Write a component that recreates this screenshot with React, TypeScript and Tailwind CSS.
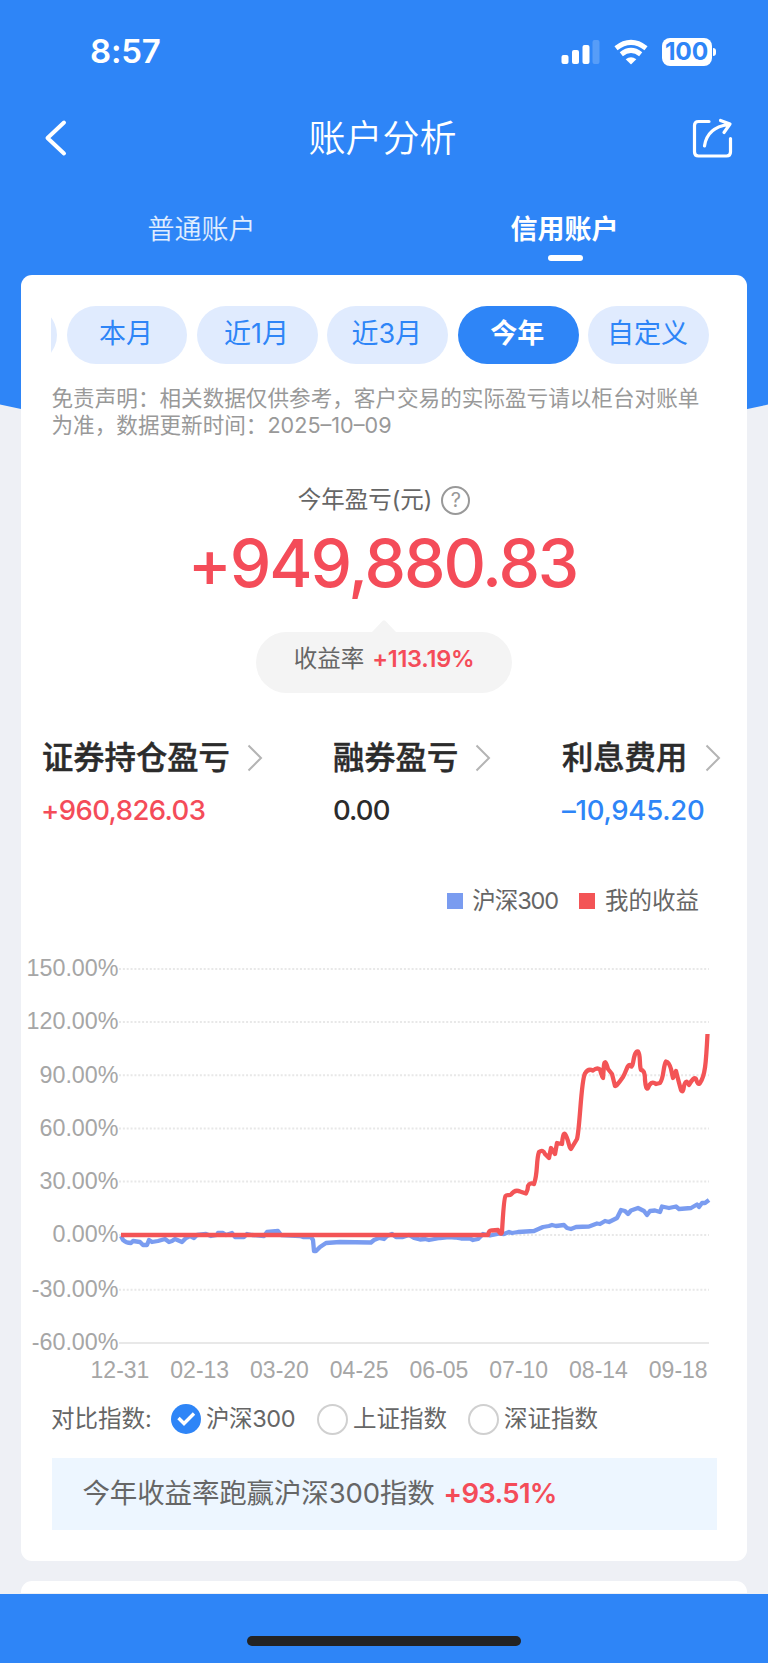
const periods = ['本月', '近1月', '近3月', '今年', '自定义']

const metrics = [
  { title: '证券持仓盈亏', value: '+960,826.03', color: 'text-[#f44c59] tracking-[-0.6px] -ml-px', width: 'w-[291px]', gap: 'gap-[17px]' },
  { title: '融券盈亏', value: '0.00', color: 'text-[#2b2b2b] tracking-[-0.9px]', width: 'w-[229px]', gap: 'gap-[17px]' },
  { title: '利息费用', value: '–10,945.20', color: 'text-[#2e85f7] tracking-[-0.25px]', width: 'w-[160px]', gap: 'gap-[18px]' },
]

const indexes = [
  { name: '沪深300', checked: true, width: 'w-[146px]' },
  { name: '上证指数', checked: false, width: 'w-[151px]' },
  { name: '深证指数', checked: false, width: 'w-[140px]' },
]

const yTicks = [
  { label: '150.00%', y: 969 },
  { label: '120.00%', y: 1022 },
  { label: '90.00%', y: 1075.3 },
  { label: '60.00%', y: 1128.6 },
  { label: '30.00%', y: 1181.5 },
  { label: '0.00%', y: 1235 },
  { label: '-30.00%', y: 1289.7 },
  { label: '-60.00%', y: 1343 },
]

const xTicks = ['12-31', '02-13', '03-20', '04-25', '06-05', '07-10', '08-14', '09-18']

const indexLine =
  'M121 1236L123 1240Q126 1243 131 1243L133 1241L140 1242L143 1245L147 1245L149 1240L152 1242L158 1241L165 1239L169 1242L172 1241L175 1239L182 1242L186 1238L190 1236L194 1238L197 1235L206 1234L211 1236L217 1235L218 1233L223 1233L226 1235L232 1233L235 1237L244 1237L247 1234L252 1235L264 1236L267 1232L278 1231L281 1235L300 1236L303 1237L311 1237L313 1240L314 1251L316 1251L320 1247L326 1243L340 1242L371 1242.5L374 1240L379 1238L384 1239L387 1236L392 1234L396 1237L403 1237L409 1235L414 1238L420 1239.5L425 1239L429 1240L440 1238L449 1237L455 1237.5L461 1238.5L470 1238.5L473 1240L478 1239L483 1234L490 1235.5L500 1233.5L504 1234L509 1232L512 1233L518 1232L534 1231L543 1227L549 1226L552 1225L556 1226L564 1225L567 1228L571 1229L576 1227L589 1226.5L597 1223.5L600 1224L605 1221L609 1222L617 1218L621 1210L625 1211L628 1214L631 1210.5L638 1208L644 1211L647 1215L650 1211L655 1210.5L660 1212L662 1206.5L669 1208L676 1206.5L679 1209L691 1208L697 1204.5L699 1207L702 1203L705 1203L709 1200'

const profitLine =
  'M121 1235H488Q489 1230 492 1230.5L498 1230Q501 1236 502 1232C503 1214 504 1198 505.5 1196C507 1194 509 1196 511 1194.5Q515 1189 520 1191.5L526 1193.5Q528 1190 528 1186Q530 1182 534 1184C538 1174 536 1160 539 1152Q543 1149 545 1154L549 1158L551 1148L555 1154L557 1143L562 1144Q563 1132 565 1134C569 1140 569 1149 571 1149L577 1139C580 1128 581 1080 585 1073.5Q588 1068 593 1070.5Q597 1067 600 1069.5Q602 1078 603 1078L604 1065Q605 1058 608 1069L612 1074L615 1086Q616 1087 623 1077C627 1070 627 1065 630 1065Q632 1069 633 1063Q635 1050 638 1051.5C641 1055 639 1065 641 1070Q645 1070 645 1080Q646 1091 648 1088Q651 1080 656 1084L660 1083C664 1078 663 1066 666 1061.5Q669 1062 671 1069L673 1078L676 1071Q679 1083 681 1090Q683 1094 684 1086Q686 1078 689 1085Q694 1076 696 1079Q698 1086 700 1083C705 1076 706 1064 707.5 1034'

function StatusBar() {
  return (
    <div className="flex h-[102px] items-center justify-between pl-[90px] pr-[52px] pt-px">
      <span className="text-[33px] font-semibold leading-none tracking-[-0.2px]">8:57</span>
      <div className="flex items-center">
        <svg width="40" height="26" viewBox="0 0 40 26" fill="#fff">
          <rect x="0.5" y="16" width="7" height="9" rx="2" />
          <rect x="11" y="11" width="7" height="14" rx="2" />
          <rect x="21.5" y="6" width="7" height="19" rx="2" />
          <rect x="31.5" y="1" width="7" height="24" rx="2" opacity=".2" />
        </svg>
        <svg className="ml-[13px] mr-px" width="34" height="26" viewBox="0 0 34 26" fill="none" stroke="#fff" strokeWidth="5">
          <path d="M2 9.2Q17 -2.5 32 9.2" />
          <path d="M7.3 15.2Q17 7.500 26.700 15.2" />
          <path d="M11.7 20.2Q17 16.2 22.3 20.2L17.5 25Q17 25.4 16.5 25Z" fill="#fff" stroke="none" />
        </svg>
        <div className="ml-[13px] flex h-[28px] w-[50px] items-center justify-center rounded-[8px] bg-white text-[24.500px] font-bold leading-none tracking-[-0.2px] text-[#2e85f7]">
          100
        </div>
        <div className="ml-[1.5px] h-[8px] w-[3px] rounded-r-full bg-white" />
      </div>
    </div>
  )
}

function Header() {
  return (
    <header className="h-[400px] bg-[#2e85f7] text-white">
      <StatusBar />
      <div className="flex h-[73px] items-center justify-between pl-[42px] pr-[35px]">
        <svg className="-mt-px" width="44" height="40" viewBox="0 0 44 40" fill="none" stroke="#fff" strokeWidth="4" strokeLinecap="round" strokeLinejoin="round">
          <path d="M22 4.500L5.500 20L22 35.500" />
        </svg>
        <h1 className="-ml-[10px] text-[37px] font-[350] leading-none">账户分析</h1>
        <svg className="-mt-[3px]" width="44" height="44" viewBox="0 0 44 44" fill="none" stroke="#fff" strokeWidth="3.2" strokeLinecap="round" strokeLinejoin="round">
          <path d="M20 6.500H9.500Q5.500 6.500 5.500 10.500V37Q5.500 41 9.500 41H37.500Q41.500 41 41.500 37V23.500" />
          <path d="M15.500 31Q18 12.500 39.500 9.500M31.500 5.500L41 9L35 17.500" />
        </svg>
      </div>
      <nav className="grid h-[99px] grid-cols-2 px-[21px] pt-[36px] text-[27px] leading-[38px]">
        <div className="-ml-[2px] text-center font-[350] text-white/85">普通账户</div>
        <div className="flex flex-col items-center font-bold">
          <span className="-ml-[2px]">信用账户</span>
          <span className="mt-[6px] h-[6px] w-[35px] rounded-full bg-white" />
        </div>
      </nav>
    </header>
  )
}

function PeriodTabs() {
  return (
    <div className="ml-[30px] flex h-[58px] w-[665px] overflow-hidden">
      <span className="-ml-[115px] w-[121px] shrink-0 rounded-full bg-[#e0ebfe]" />
      {periods.map((p) => (
        <button
          key={p}
          className={`ml-[9.700px] w-[120.700px] shrink-0 rounded-full pb-[2px] pr-[2px] text-[27px] leading-none ${
            p === '今年' ? 'bg-[#2e85f7] font-bold text-white' : 'bg-[#e0ebfe] text-[#2e85f7]'
          }`}
        >
          {p}
        </button>
      ))}
    </div>
  )
}

function Summary() {
  return (
    <section className="flex flex-col items-center">
      <div className="mt-[42.500px] flex h-[36px] items-center text-[23.500px] text-[#666]">
        <span>今年盈亏(元)</span>
        <span className="ml-[9px] flex h-[29px] w-[29px] items-center justify-center rounded-full border-2 border-[#999] text-[20px] leading-none text-[#999]">
          ?
        </span>
      </div>
      <div className="-ml-[3px] mt-[11px] h-[68px] text-[66px] font-medium leading-[68px] tracking-[-2.1px] text-[#f44c59]">
        +949,880.83
      </div>
      <svg className="mt-[23px] block" width="24" height="12" viewBox="0 0 24 12">
        <path d="M0 12L10.500 1Q12 -.5 13.500 1L24 12Z" fill="#f4f4f4" />
      </svg>
      <div className="flex h-[61px] w-[256px] justify-center rounded-full bg-[#f4f4f4] pt-[10px] text-[23.500px] leading-[34px] text-[#666]">
        收益率<span className="ml-[8px] font-semibold tracking-[-0.25px] text-[#f44c59]">+113.19%</span>
      </div>
    </section>
  )
}

function Metrics() {
  return (
    <section className="mt-[45px] flex pl-[21px]">
      {metrics.map((m) => (
        <div key={m.title} className={`shrink-0 ${m.width}`}>
          <div className={`flex h-[42px] items-center ${m.gap}`}>
            <span className="whitespace-nowrap text-[31.300px] font-medium leading-none text-[#2b2b2b] [-webkit-text-stroke:0.5px_#2b2b2b]">
              {m.title}
            </span>
            <svg className="-mt-[2px] shrink-0" width="16" height="28" viewBox="0 0 16 28" fill="none" stroke="#b4b4b4" strokeWidth="2">
              <path d="M1.500 1.500L14 14L1.500 26.500" />
            </svg>
          </div>
          <div className={`mt-[12px] text-[27.500px] font-medium leading-[36px] ${m.color}`}>{m.value}</div>
        </div>
      ))}
    </section>
  )
}

function Chart() {
  return (
    <section>
      <div className="mt-[55px] flex h-[36px] items-center justify-end pr-[48px] text-[23.500px] text-[#666]">
        <span className="mr-[9px] h-[16px] w-[16px] bg-[#7a9cf0]" />
        <span className="tracking-[-1.1px]">沪深300</span>
        <span className="ml-[21px] mr-[10px] h-[16px] w-[16px] bg-[#f35456]" />
        <span>我的收益</span>
      </div>
      <svg className="block" width="726" height="471" viewBox="21 919 726 471" fontFamily='"Liberation Sans", sans-serif' fontSize="23" fill="#a6a6a6">
        {yTicks.map((t) => (
          <g key={t.label}>
            <line
              x1="119"
              x2="709"
              y1={t.y}
              y2={t.y}
              stroke="#e8e8e8"
              strokeWidth={2}
              strokeDasharray={t.label === '-60.00%' ? undefined : '2 1.85'}
            />
            <text x="118.500" y={t.y + 7.3} textAnchor="end" fontSize="23.3">
              {t.label}
            </text>
          </g>
        ))}
        {xTicks.map((label, i) => (
          <text key={label} x={120 + i * 79.75} y="1378" textAnchor="middle">
            {label}
          </text>
        ))}
        <path d={indexLine} fill="none" stroke="#7a9cf0" strokeWidth="4.3" strokeLinejoin="round" />
        <path d={profitLine} fill="none" stroke="#f35456" strokeWidth="4.3" strokeLinejoin="round" />
      </svg>
    </section>
  )
}

function IndexPicker() {
  return (
    <div className="mt-[11px] flex h-[36px] items-center pl-[31px] text-[23.500px] leading-none text-[#666]">
      <span className="-ml-px w-[120px]">对比指数:</span>
      {indexes.map((item) => (
        <div key={item.name} className={`flex items-center whitespace-nowrap ${item.width}`}>
          {item.checked ? (
            <span className="flex h-[30px] w-[30px] items-center justify-center rounded-full bg-[#2e85f7]">
              <svg width="20" height="18" viewBox="0 0 20 18" fill="none" stroke="#fff" strokeWidth="3.4">
                <path d="M2.500 8L8 13.500L18 3.500" />
              </svg>
            </span>
          ) : (
            <span className="h-[31px] w-[31px] rounded-full border-2 border-[#d0d0d0]" />
          )}
          <span className={item.checked ? 'ml-[5px] tracking-[-0.4px]' : 'ml-[5px]'}>{item.name}</span>
        </div>
      ))}
    </div>
  )
}

export default function App() {
  return (
    <div className="flex h-[1663px] w-[768px] flex-col overflow-hidden bg-[#eef0f5] font-['Inter','Noto_Sans_CJK_SC',sans-serif]" lang="zh-CN">
      <Header />
      <svg className="block shrink-0" width="768" height="50" viewBox="0 0 768 50">
        <path d="M0 0H768V4.500Q384 90 0 4.500Z" fill="#2e85f7" />
      </svg>
      <main className="relative -mt-[175.500px] flex grow flex-col px-[21px]">
        <div className="h-[1286.500px] shrink-0 rounded-[11px] bg-white pt-[31px]">
          <PeriodTabs />
          <p className="ml-[30.500px] mt-[21px] w-[660px] text-[21.600px] leading-[27.500px] text-[#999]">
            免责声明：相关数据仅供参考，客户交易的实际盈亏请以柜台对账单
            <br />
            为准，数据更新时间：2025–10–09
          </p>
          <Summary />
          <Metrics />
          <Chart />
          <IndexPicker />
          <div className="ml-[30.500px] mt-[21px] flex h-[72px] w-[665px] items-center bg-[#edf6ff] pl-[31px] text-[27.500px] leading-none tracking-[-0.15px] text-[#666]">
            今年收益率跑赢沪深300指数
            <span className="ml-[9px] font-semibold tracking-[-0.7px] text-[#f44c59]">+93.51%</span>
          </div>
        </div>
        <div className="mt-[20px] h-[12px] shrink-0 rounded-t-[11px] bg-white" />
      </main>
      <footer className="relative flex h-[69.500px] shrink-0 items-end justify-center bg-[#2e85f7] pb-[17px]">
        <div className="h-[10px] w-[274px] rounded-full bg-[#232323]" />
      </footer>
    </div>
  )
}
